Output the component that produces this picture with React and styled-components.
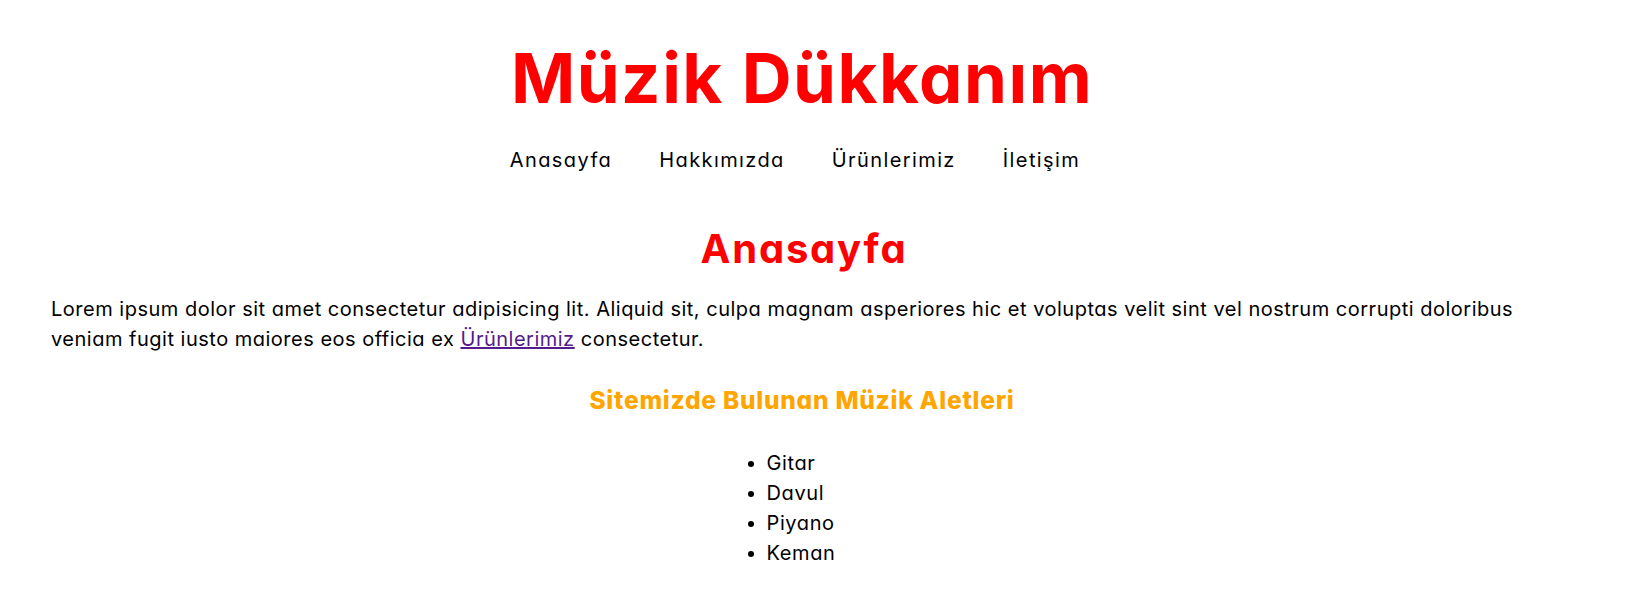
import React from 'react'
import styled, { createGlobalStyle } from 'styled-components'

const GlobalStyle = createGlobalStyle`
  * {
    box-sizing: border-box;
  }
  body {
    margin: 0;
    background: #fff;
    color: #000;
    font-family: Inter, "Noto Sans", "DejaVu Sans", sans-serif;
    font-feature-settings: "cv11" 1;
  }
`

const Page = styled.div`
  padding: 38px 84px 0 51px;
`

const Header = styled.header`
  display: flex;
  flex-direction: column;
  align-items: center;
`

const Title = styled.h1`
  margin: 0;
  font-size: 69px;
  line-height: 80px;
  font-weight: 700;
  color: #ff0000;
  letter-spacing: 1.5px;
`

const Nav = styled.nav`
  display: flex;
  justify-content: center;
  gap: 47px;
  margin-top: 27px;
  padding-right: 14px;
`

const NavLink = styled.a`
  font-size: 20px;
  line-height: 30px;
  color: #000;
  text-decoration: none;
  letter-spacing: 1.4px;
`

const Main = styled.main`
  margin-top: 49px;
`

const Heading = styled.h2`
  margin: 0;
  text-align: center;
  font-size: 40px;
  line-height: 50px;
  font-weight: 700;
  color: #ff0000;
  letter-spacing: 1.8px;
  padding-left: 4px;
`

const Text = styled.p`
  margin: 20px 0 0;
  font-size: 20px;
  line-height: 30px;
  letter-spacing: 0.5px;
`

const InlineLink = styled.a`
  color: #551a8b;
  text-decoration: underline;
`

const SubHeading = styled.h3`
  margin: 29px 0 0;
  text-align: center;
  font-size: 24.5px;
  line-height: 34px;
  font-weight: 800;
  color: #ffa500;
  letter-spacing: 0.75px;
`

const List = styled.ul`
  width: fit-content;
  margin: 31px auto 0;
  padding: 0 42px 0 40px;
  font-size: 20px;
  line-height: 30px;
  letter-spacing: 0.6px;
`

const Item = styled.li``

const links = ['Anasayfa', 'Hakkımızda', 'Ürünlerimiz', 'İletişim']
const instruments = ['Gitar', 'Davul', 'Piyano', 'Keman']

export default function App() {
  return (
    <>
      <GlobalStyle />
      <Page>
        <Header>
          <Title>Müzik Dükkanım</Title>
          <Nav>
            {links.map(l => (
              <NavLink key={l} href="#">
                {l}
              </NavLink>
            ))}
          </Nav>
        </Header>
        <Main>
          <Heading>Anasayfa</Heading>
          <Text>
            Lorem ipsum dolor sit amet consectetur adipisicing lit. Aliquid sit, culpa magnam asperiores hic et
            voluptas velit sint vel nostrum corrupti doloribus veniam fugit iusto maiores eos officia ex{' '}
            <InlineLink href="#">Ürünlerimiz</InlineLink> consectetur.
          </Text>
          <SubHeading>Sitemizde Bulunan Müzik Aletleri</SubHeading>
          <List>
            {instruments.map(i => (
              <Item key={i}>{i}</Item>
            ))}
          </List>
        </Main>
      </Page>
    </>
  )
}
